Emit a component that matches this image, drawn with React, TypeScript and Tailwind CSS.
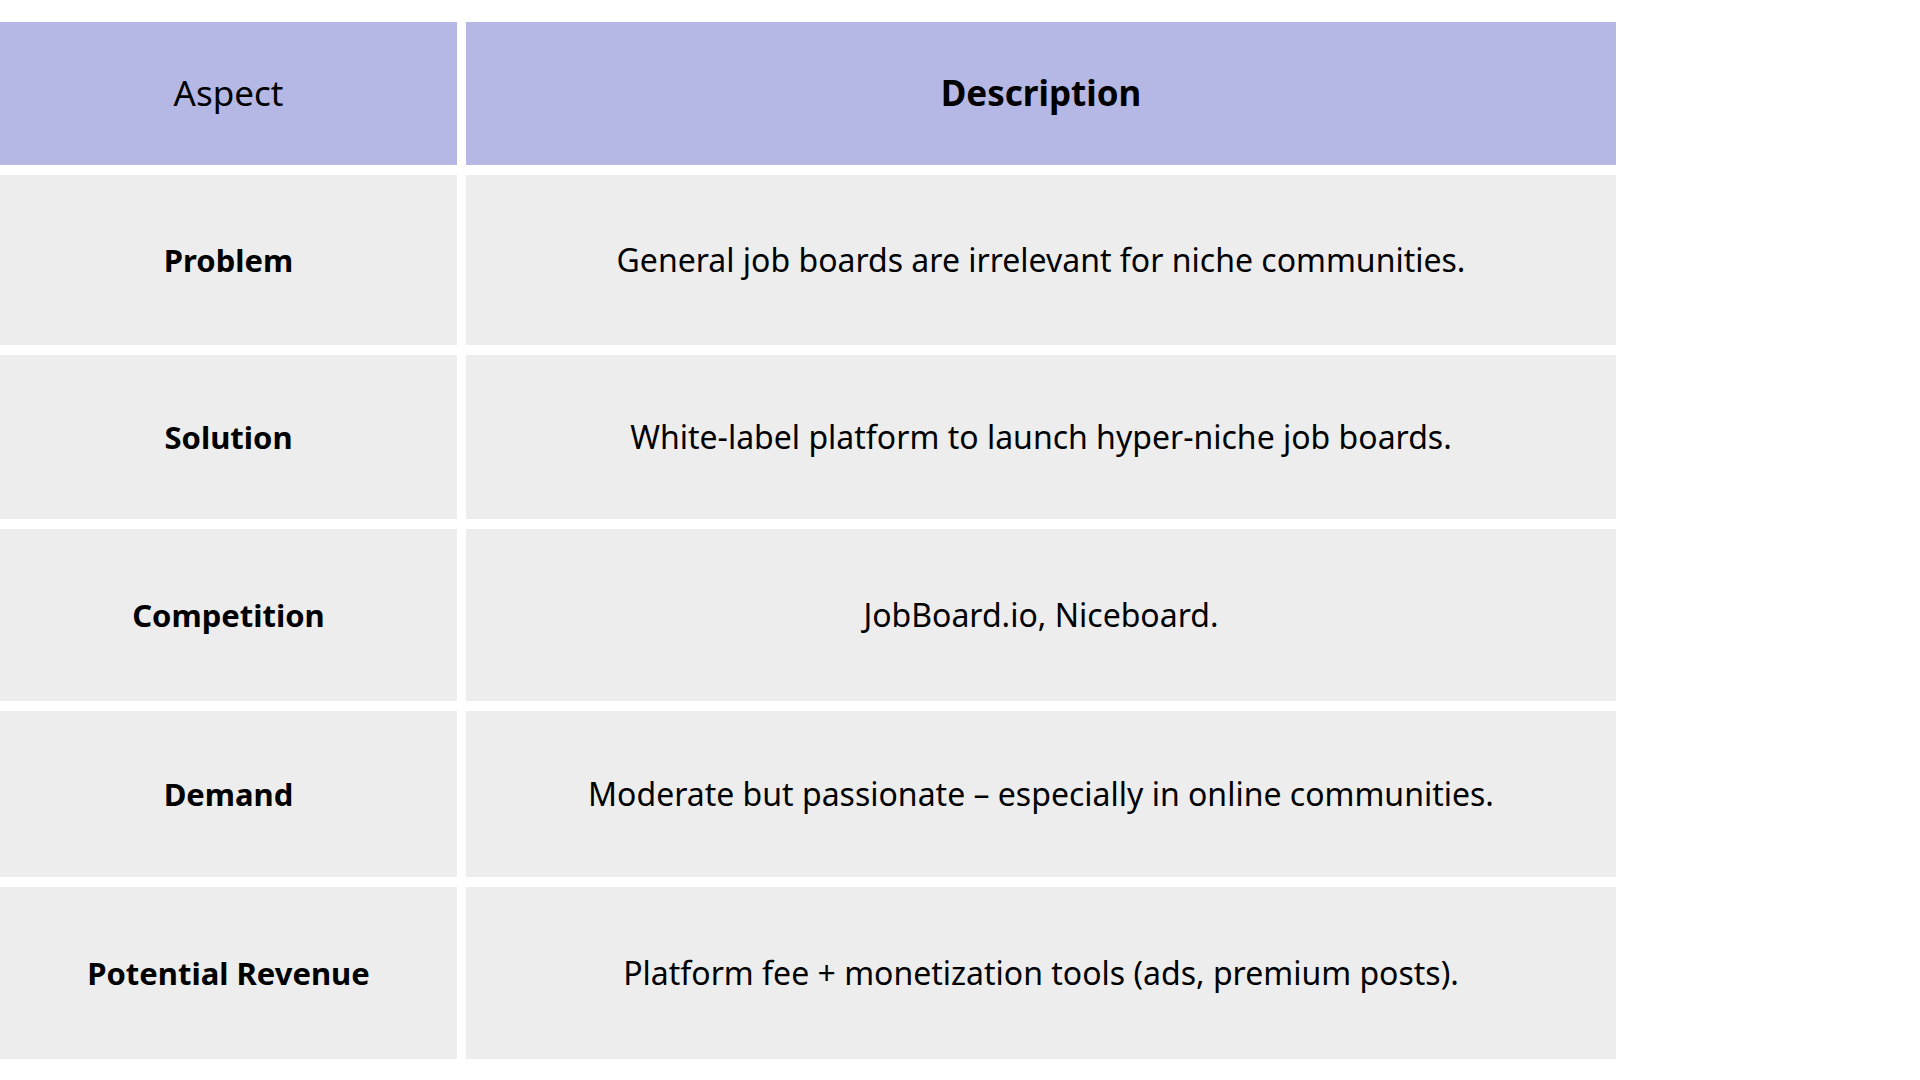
const rows = [
  { aspect: "Problem", text: "General job boards are irrelevant for niche communities.", h: "h-[170px]" },
  { aspect: "Solution", text: "White-label platform to launch hyper-niche job boards.", h: "h-[164px]" },
  { aspect: "Competition", text: "JobBoard.io, Niceboard.", h: "h-[172px]" },
  { aspect: "Demand", text: "Moderate but passionate – especially in online communities.", h: "h-[166px]" },
  { aspect: "Potential Revenue", text: "Platform fee + monetization tools (ads, premium posts).", h: "h-[172px]" },
];

export default function App() {
  return (
    <div className="w-[1920px] h-[1080px] bg-white pt-[22px] font-['Noto_Sans',sans-serif] text-black">
      <div className="flex flex-col gap-[10px] w-[1616px]">
        <div className="flex gap-[9px] h-[143px] text-[35px]">
          <div className="w-[457px] bg-[#b5b8e4] flex items-center justify-center">Aspect</div>
          <div className="flex-1 bg-[#b5b8e4] flex items-center justify-center font-bold">Description</div>
        </div>
        {rows.map((r) => (
          <div key={r.aspect} className={`flex gap-[9px] ${r.h}`}>
            <div className="w-[457px] bg-[#ededed] flex items-center justify-center font-bold text-[31px]">
              {r.aspect}
            </div>
            <div className="flex-1 bg-[#ededed] flex items-center justify-center text-[32px]">{r.text}</div>
          </div>
        ))}
      </div>
    </div>
  );
}
